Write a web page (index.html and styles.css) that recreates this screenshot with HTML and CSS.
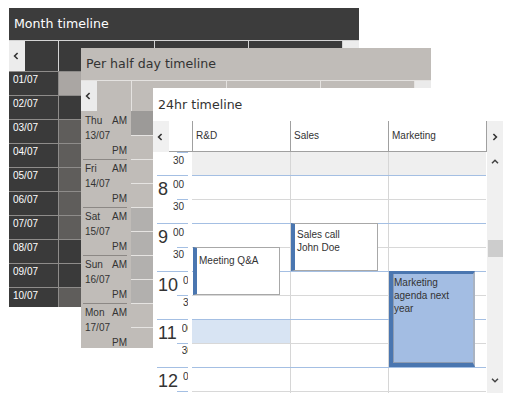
FILE: index.html
```html
<!DOCTYPE html>
<html>
<head>
<meta charset="utf-8">
<link rel="stylesheet" href="styles.css">
</head>
<body>
<div class="desk">

  <section class="win month">
    <div class="title">Month timeline</div>
    <div class="mhead">
      <div class="nav"><svg width="6" height="8" viewBox="0 0 6 8"><path d="M4.6 1 L1.6 4 L4.6 7" fill="none" stroke="#333" stroke-width="1.6"/></svg></div>
      <div class="corner"></div>
      <div class="hc"></div>
      <div class="hc"></div>
      <div class="hc"></div>
      <div class="nav nav-r hc"></div>
    </div>
    <div class="mrows">
      <div class="mrow"><div class="mlab">01/07</div><div class="mc light"></div><div class="mc"></div></div>
      <div class="mrow"><div class="mlab">02/07</div><div class="mc"></div><div class="mc"></div></div>
      <div class="mrow"><div class="mlab">03/07</div><div class="mc mid"></div><div class="mc"></div></div>
      <div class="mrow"><div class="mlab">04/07</div><div class="mc mid"></div><div class="mc"></div></div>
      <div class="mrow"><div class="mlab">05/07</div><div class="mc mid"></div><div class="mc"></div></div>
      <div class="mrow"><div class="mlab">06/07</div><div class="mc mid"></div><div class="mc"></div></div>
      <div class="mrow"><div class="mlab">07/07</div><div class="mc mid"></div><div class="mc"></div></div>
      <div class="mrow"><div class="mlab">08/07</div><div class="mc"></div><div class="mc"></div></div>
      <div class="mrow"><div class="mlab">09/07</div><div class="mc"></div><div class="mc"></div></div>
      <div class="mrow"><div class="mlab">10/07</div><div class="mc mid"></div><div class="mc"></div></div>
    </div>
  </section>

  <section class="win half">
    <div class="title">Per half day timeline</div>
    <div class="hhead">
      <div class="nav"><svg width="6" height="8" viewBox="0 0 6 8"><path d="M4.6 1 L1.6 4 L4.6 7" fill="none" stroke="#333" stroke-width="1.6"/></svg></div>
      <div class="corner"></div>
      <div class="hc"></div>
      <div class="hc"></div>
      <div class="hc"></div>
      <div class="nav nav-r hc"></div>
    </div>
    <div class="hrows">
      <div class="hday">
        <div class="hlab"><div class="l1"><span>Thu</span><span>AM</span></div><div>13/07</div><div class="pm">PM</div></div>
        <div class="hcells"><div class="hcl dark"></div><div class="hcl"></div></div>
      </div>
      <div class="hday">
        <div class="hlab"><div class="l1"><span>Fri</span><span>AM</span></div><div>14/07</div><div class="pm">PM</div></div>
        <div class="hcells"><div class="hcl"></div><div class="hcl"></div></div>
      </div>
      <div class="hday">
        <div class="hlab"><div class="l1"><span>Sat</span><span>AM</span></div><div>15/07</div><div class="pm">PM</div></div>
        <div class="hcells"><div class="hcl grey"></div><div class="hcl grey"></div></div>
      </div>
      <div class="hday">
        <div class="hlab"><div class="l1"><span>Sun</span><span>AM</span></div><div>16/07</div><div class="pm">PM</div></div>
        <div class="hcells"><div class="hcl grey"></div><div class="hcl grey"></div></div>
      </div>
      <div class="hday">
        <div class="hlab"><div class="l1"><span>Mon</span><span>AM</span></div><div>17/07</div><div class="pm">PM</div></div>
        <div class="hcells"><div class="hcl"></div><div class="hcl"></div></div>
      </div>
    </div>
  </section>

  <section class="win day">
    <div class="title">24hr timeline</div>
    <div class="dhead">
      <div class="dnav"><svg width="6" height="8" viewBox="0 0 6 8"><path d="M4.6 1 L1.6 4 L4.6 7" fill="none" stroke="#333" stroke-width="1.6"/></svg></div>
      <div class="dh blank"></div>
      <div class="dh col">R&amp;D</div>
      <div class="dh col">Sales</div>
      <div class="dh col">Marketing</div>
      <div class="dnav dnav-r"><svg width="6" height="8" viewBox="0 0 6 8"><path d="M1.4 1 L4.4 4 L1.4 7" fill="none" stroke="#333" stroke-width="1.6"/></svg></div>
    </div>
    <div class="dbody">
      <div class="times">
        <div class="t7"><div class="tick"></div><div class="m30 first">30</div></div>
        <div class="hr"><div class="num">8</div><div class="m00">00</div><div class="tick"></div><div class="m30">30</div></div>
        <div class="hr"><div class="num">9</div><div class="m00">00</div><div class="tick"></div><div class="m30">30</div></div>
        <div class="hr"><div class="num">10</div><div class="m00">00</div><div class="tick"></div><div class="m30">30</div></div>
        <div class="hr"><div class="num">11</div><div class="m00">00</div><div class="tick"></div><div class="m30">30</div></div>
        <div class="hr"><div class="num">12</div><div class="m00">00</div><div class="tick"></div><div class="m30">30</div></div>
      </div>
      <div class="grid">
        <div class="lines">
          <div class="gr top"><div class="c"></div><div class="c"></div><div class="c"></div></div>
          <div class="gr h"><div class="c"></div><div class="c"></div><div class="c"></div></div>
          <div class="gr s"><div class="c"></div><div class="c"></div><div class="c"></div></div>
          <div class="gr h"><div class="c"></div><div class="c"></div><div class="c"></div></div>
          <div class="gr s"><div class="c"></div><div class="c"></div><div class="c"></div></div>
          <div class="gr h"><div class="c"></div><div class="c"></div><div class="c"></div></div>
          <div class="gr s"><div class="c"></div><div class="c"></div><div class="c"></div></div>
          <div class="gr h"><div class="c picked"></div><div class="c"></div><div class="c"></div></div>
          <div class="gr s"><div class="c"></div><div class="c"></div><div class="c"></div></div>
          <div class="gr h"><div class="c"></div><div class="c"></div><div class="c"></div></div>
          <div class="gr s"><div class="c"></div><div class="c"></div><div class="c"></div></div>
        </div>
        <div class="evs">
          <div class="ev ev-meet">Meeting Q&amp;A</div>
          <div class="ev ev-sales">Sales call<br>John Doe</div>
          <div class="ev ev-mkt">Marketing agenda next year</div>
        </div>
      </div>
      <div class="gap"></div>
      <div class="sbar">
        <svg class="up" width="8" height="5" viewBox="0 0 8 5"><path d="M1 4.2 L4 1.2 L7 4.2" fill="none" stroke="#444" stroke-width="1.5"/></svg>
        <div class="thumb"></div>
        <svg class="down" width="8" height="5" viewBox="0 0 8 5"><path d="M1 0.8 L4 3.8 L7 0.8" fill="none" stroke="#444" stroke-width="1.5"/></svg>
      </div>
    </div>
  </section>

</div>
</body>
</html>
```

FILE: styles.css
```css
* { box-sizing: border-box; }
body { margin: 0; background: #fff; }

.desk {
  position: relative;
  width: 512px;
  height: 393px;
  overflow: hidden;
  font-family: "Liberation Sans", Arial, sans-serif;
  font-size: 10px;
  color: #333;
}

.win { position: absolute; overflow: hidden; }
.month { left: 9px; top: 8px; width: 350px; height: 299px; background: #3a3a3a; }
.half { left: 81px; top: 48px; width: 350px; height: 300px; background: #c0bcb8; }
.day { left: 153px; top: 88px; width: 350px; height: 310px; background: #fff; }

.title {
  font-family: "DejaVu Sans", sans-serif;
  font-size: 12.6px;
  padding-left: 5px;
  white-space: nowrap;
}
.month .title { height: 32px; line-height: 32px; color: #fff; background: #3c3c3c; }
.half .title { height: 32px; line-height: 32px; color: #333; }
.day .title { height: 33px; line-height: 33px; color: #333; padding-left: 5px; }

.nav {
  background: #ececec;
  display: flex;
  align-items: center;
  padding-left: 4px;
}

/* month */
.mhead {
  display: grid;
  grid-template-columns: 16px 33px 96px 94px 94px 1fr;
  height: 31px;
  border-top: 1px solid #d4d4d4;
}
.mhead .hc { border-left: 1px solid #d4d4d4; }
.mrow {
  display: grid;
  grid-template-columns: 49px 96px 94px 94px 1fr;
  height: 24px;
  border-top: 1px solid #8e8c8a;
}
.mlab {
  color: #fff;
  padding: 0 0 0 4px;
  line-height: 16px;
  background: #3a3a3a;
}
.mc { border-left: 1px solid #8e8c8a; background: #3a3a3a; }
.mc.mid { background: #5f5d5b; }
.mc.light { background: #aaa6a3; }

/* half day */
.hhead {
  display: grid;
  grid-template-columns: 16px 34px 95px 94px 94px 1fr;
  height: 31px;
  border-top: 1px solid #e4e2e0;
}
.hhead .nav { background: #ebebeb; }
.hhead .hc { border-left: 1px solid #e4e2e0; }
.hday {
  display: grid;
  grid-template-columns: 50px 95px;
  height: 48px;
}
.hlab {
  margin: 0 4px 0 2px;
  padding: 2px 0 0 2px;
  line-height: 15px;
  color: #333;
}
.hday + .hday .hlab { border-top: 1px solid #8c8885; padding-top: 1px; }
.hlab .l1 { display: flex; justify-content: space-between; }
.hlab .pm { text-align: right; }
.hcells { display: grid; grid-template-rows: 24px 24px; }
.hcl { background: #c0bcb8; }
.hcl + .hcl { border-top: 1px solid #e6e4e2; }
.hday + .hday .hcl:first-child { border-top: 1px solid #e6e4e2; }
.hcl.dark { background: #9c9a98; }
.hcl.grey { background: #b2b0ae; }

/* 24hr */
.dhead {
  display: grid;
  grid-template-columns: 16px 23px 98px 98px 98px 17px;
  height: 31px;
}
.dnav {
  background: #f0f0f0;
  display: flex;
  align-items: center;
  padding-left: 4px;
}
.dnav-r {
  border-left: 1px solid #a0a0a0;
  background-clip: padding-box;
  padding-left: 5px;
}
.dh { border-bottom: 1px solid #a0a0a0; }
.dh.col {
  border-left: 1px solid #a0a0a0;
  padding-left: 3px;
  line-height: 30px;
  color: #333;
}

.dbody { display: flex; height: 245px; }
.times { width: 39px; padding: 0 4px; overflow: hidden; flex: none; }
.t7 { height: 23px; }
.tick { width: 11px; height: 0; border-top: 1px solid #a4bfe3; margin-left: auto; }
.m30.first { margin-left: 16px; padding-top: 2px; line-height: 12px; }
.hr {
  height: 48px;
  border-top: 1px solid #a4bfe3;
  display: grid;
  grid-template-columns: auto 1fr;
  grid-template-rows: 23px 24px;
  overflow: hidden;
}
.num {
  grid-column: 1;
  grid-row: 1 / 3;
  font-size: 18px;
  line-height: 20px;
  padding: 3px 0 0 1px;
  color: #333;
}
.m00, .hr .m30 {
  grid-column: 2;
  margin-left: 5px;
  line-height: 12px;
  white-space: nowrap;
  overflow: hidden;
  min-width: 0;
}
.m00 { grid-row: 1; padding-top: 3px; }
.hr .tick { grid-column: 1 / 3; grid-row: 2; justify-self: end; }
.hr .m30 { grid-row: 2; padding-top: 2px; }

.grid {
  width: 294px;
  flex: none;
  display: grid;
  overflow: hidden;
}
.lines, .evs { grid-area: 1 / 1; }
.gr { display: flex; height: 24px; }
.gr.top { height: 23px; background: #efefef; }
.gr.h { border-top: 1px solid #a4bfe3; }
.gr.s { border-top: 1px solid #d8d8d8; }
.c { width: 98px; flex: none; }
.c + .c { border-left: 1px solid #d6d6d6; }
.c.picked { background: #d8e4f3; }

.evs {
  display: grid;
  grid-template-columns: 98px 98px 98px;
  grid-template-rows: 23px repeat(10, 24px);
  align-self: start;
}
.ev {
  margin-left: 1px;
  width: 87px;
  background: #fff;
  border: 1px solid #a8a8a8;
  border-left: 4px solid #4a76b0;
  padding: 5px 2px 0 2px;
  line-height: 13px;
  color: #333;
}
.ev-meet { grid-column: 1; grid-row: 5 / span 2; padding-top: 6px; }
.ev-sales { grid-column: 2; grid-row: 4 / span 2; padding-top: 4px; }
.ev-mkt {
  grid-column: 3;
  grid-row: 6 / span 4;
  width: 86px;
  background: #a3bde3;
  border-top: 3px solid #4a76b0;
  border-bottom: 4px solid #4a76b0;
  border-right: 2px solid #a9b3c2;
  padding: 2px 10px 0 1px;
  box-shadow: inset 1px 0 #8e9cb2, inset 0 -1px #8e9cb2;
}

.gap { width: 1px; flex: none; }
.sbar {
  width: 16px;
  flex: none;
  background: #f0f0f0;
  display: flex;
  flex-direction: column;
  align-items: center;
}
.sbar .up { margin-top: 7px; flex: none; }
.thumb { width: 15px; height: 17px; background: #cdcdcd; margin-top: 76px; flex: none; }
.sbar .down { margin-top: 121px; flex: none; }
```
